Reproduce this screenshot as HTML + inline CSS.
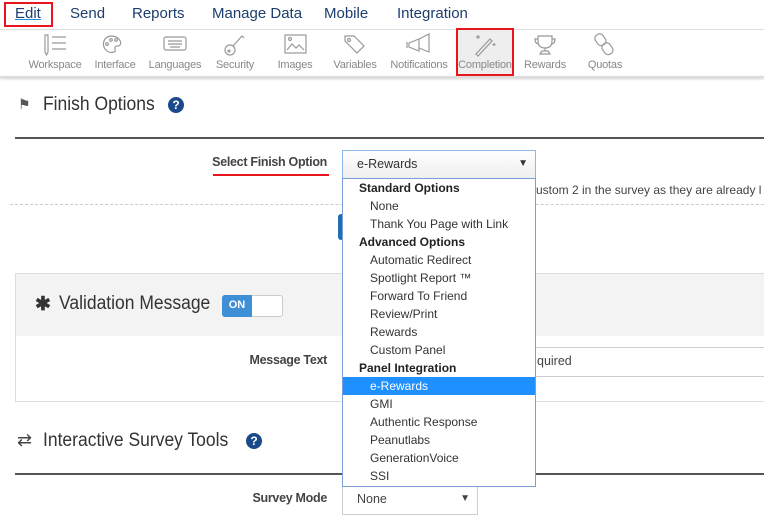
<!DOCTYPE html>
<html><head><meta charset="utf-8"><style>
*{margin:0;padding:0;box-sizing:border-box}
body{width:764px;height:517px;overflow:hidden;background:#fff;font-family:"Liberation Sans Narrow","Liberation Sans",sans-serif;color:#333;position:relative}
.a{position:absolute;white-space:nowrap}
.nav{font-size:15px;top:5px;color:#1c3d6e}
.tl{font-size:11px;color:#888;top:59px;width:60px;text-align:center;letter-spacing:-0.2px}
.lbl{font-size:12.5px;font-weight:bold;color:#444;text-align:right;letter-spacing:-0.3px}
.dd div{height:18px;line-height:18px;font-size:12px;padding-left:27px;color:#333}
.dd div.g{font-weight:bold;padding-left:16px;color:#222}
.dd div.s{background:#1e90ff;color:#fff}
h2{font-weight:normal;font-size:19px;color:#333;transform:scaleX(.92);transform-origin:left}
.q{display:inline-block;width:16px;height:16px;border-radius:50%;background:#1b4a8a;color:#fff;font-size:12px;font-weight:bold;text-align:center;line-height:16px;font-family:"Liberation Sans",sans-serif}
</style></head><body>
<div class="a" style="left:4px;top:2px;width:49px;height:25px;border:2px solid #e8141e"></div>
<div class="a nav" style="left:15px;text-decoration:underline;text-decoration-color:#1e8fd6">Edit</div>
<div class="a nav" style="left:70px">Send</div>
<div class="a nav" style="left:132px">Reports</div>
<div class="a nav" style="left:212px">Manage Data</div>
<div class="a nav" style="left:324px">Mobile</div>
<div class="a nav" style="left:397px">Integration</div>
<div class="a" style="left:0;top:29px;width:764px;height:1px;background:#ddd"></div>
<div class="a" style="left:0;top:76px;width:764px;height:2px;background:#ddd;box-shadow:0 1px 2px #ccc"></div>
<div class="a" style="left:456px;top:28px;width:58px;height:48px;background:#eee;border:2px solid #e8141e"></div>
<svg class="a" style="left:0;top:30px" width="640" height="30" fill="none" stroke="#999" stroke-width="1.2">
<path d="M45 5v17l1.5 3 1.5-3V5zM52 7h14M52 13h14M52 19h14"/>
<path d="M106 20c-4-3-4-13 5-14 8 0 11 6 9 9-1 2-4 0-5 2s2 4-1 5c-3 1-6 0-8-2z"/><circle cx="111" cy="10" r="1.3"/><circle cx="116" cy="10" r="1.3"/><circle cx="107" cy="14" r="1.3"/>
<rect x="164" y="7" width="22" height="13" rx="2"/><path d="M168 11h14M168 14h14M170 17h10"/>
<circle cx="230" cy="20" r="5"/><path d="M233 16l9-10 2 2"/><circle cx="229" cy="21" r="1"/>
<rect x="285" y="5" width="21" height="18"/><path d="M287 20l5-6 4 4 3-3 5 5"/><circle cx="290" cy="9" r="1.5"/>
<path d="M345 6l9 0 10 10-7 7-12-12z"/><circle cx="349" cy="10" r="1.5"/>
<path d="M409 13l10-4v12l-10-4zM419 9l10-5v18l-10-4M407 12v6"/>
<path d="M476 24l14-15 2 2-14 15zM478 5v4M476 7h4M494 13v3M492.5 14.5h3"/>
<path d="M538 6h14v5c0 5-3 7-7 7s-7-2-7-7zM538 9h-3c0 4 2 5 4 5M552 9h3c0 4-2 5-4 5M545 18v3M540 24h10l-2-3h-6z"/>
<rect x="596" y="4" width="9" height="12" rx="4" transform="rotate(-35 600 10)"/><rect x="603" y="13" width="9" height="12" rx="4" transform="rotate(-35 607 19)"/>
</svg>
<div class="a tl" style="left:25px">Workspace</div>
<div class="a tl" style="left:85px">Interface</div>
<div class="a tl" style="left:145px">Languages</div>
<div class="a tl" style="left:205px">Security</div>
<div class="a tl" style="left:265px">Images</div>
<div class="a tl" style="left:325px">Variables</div>
<div class="a tl" style="left:389px">Notifications</div>
<div class="a tl" style="left:455px">Completion</div>
<div class="a tl" style="left:515px">Rewards</div>
<div class="a tl" style="left:575px">Quotas</div>
<div class="a" style="left:18px;top:96px;font-size:14px;color:#555">⚑</div>
<h2 class="a" style="left:43px;top:94px">Finish Options</h2>
<span class="a q" style="left:168px;top:97px">?</span>
<div class="a" style="left:15px;top:137px;width:749px;height:2px;background:#555"></div>
<div class="a lbl" style="left:180px;top:155px;width:147px">Select Finish Option</div>
<div class="a" style="left:213px;top:174px;width:116px;height:2px;background:#e8141e"></div>
<div class="a" style="left:342px;top:150px;width:194px;height:29px;border:1px solid #8fb8e8;background:linear-gradient(#fff,#eee);font-size:12.5px;padding:6px 0 0 14px">e-Rewards<span style="position:absolute;right:7px;top:7px;font-size:10px">▼</span></div>
<div class="a" style="left:536px;top:183px;font-size:12px;color:#444">ustom 2 in the survey as they are already l</div>
<div class="a" style="left:10px;top:204px;width:754px;border-top:1px dashed #ccc"></div>
<div class="a" style="left:338px;top:214px;width:6px;height:26px;background:#1e6fb5;border-radius:3px"></div>
<div class="a" style="left:15px;top:273px;width:760px;height:129px;border:1px solid #ddd"></div>
<div class="a" style="left:16px;top:274px;width:760px;height:62px;background:#f3f3f3"></div>
<div class="a" style="left:35px;top:293px;font-size:19px;font-weight:bold;color:#333">✱</div>
<h2 class="a" style="left:59px;top:293px">Validation Message</h2>
<div class="a" style="left:222px;top:295px;width:61px;height:22px;border:1px solid #ccc;border-radius:3px;background:#fff"></div>
<div class="a" style="left:222px;top:295px;width:30px;height:22px;background:#3f8fd6;border-radius:3px 0 0 3px;color:#fff;font-size:11px;font-weight:bold;text-align:center;line-height:21px">ON</div>
<div class="a lbl" style="left:180px;top:353px;width:147px">Message Text</div>
<div class="a" style="left:536px;top:347px;width:240px;height:30px;border:1px solid #ccc;border-left:none;font-size:12.5px;color:#444;padding:6px 0 0 1px">quired</div>
<div class="a" style="left:17px;top:430px;font-size:18px;color:#444">⇄</div>
<h2 class="a" style="left:43px;top:430px">Interactive Survey Tools</h2>
<span class="a q" style="left:246px;top:433px">?</span>
<div class="a" style="left:15px;top:473px;width:749px;height:2px;background:#555"></div>
<div class="a lbl" style="left:180px;top:491px;width:147px">Survey Mode</div>
<div class="a" style="left:342px;top:485px;width:136px;height:30px;border:1px solid #ccc;font-size:12.5px;padding:6px 0 0 14px;color:#444">None<span style="position:absolute;right:7px;top:7px;font-size:10px">▼</span></div>
<div class="a dd" style="left:342px;top:178px;width:194px;height:309px;border:1px solid #7a9fd6;background:#fff">
<div class="g">Standard Options</div><div>None</div><div>Thank You Page with Link</div>
<div class="g">Advanced Options</div><div>Automatic Redirect</div><div>Spotlight Report ™</div><div>Forward To Friend</div><div>Review/Print</div><div>Rewards</div><div>Custom Panel</div>
<div class="g">Panel Integration</div><div class="s">e-Rewards</div><div>GMI</div><div>Authentic Response</div><div>Peanutlabs</div><div>GenerationVoice</div><div>SSI</div>
</div>
</body></html>
